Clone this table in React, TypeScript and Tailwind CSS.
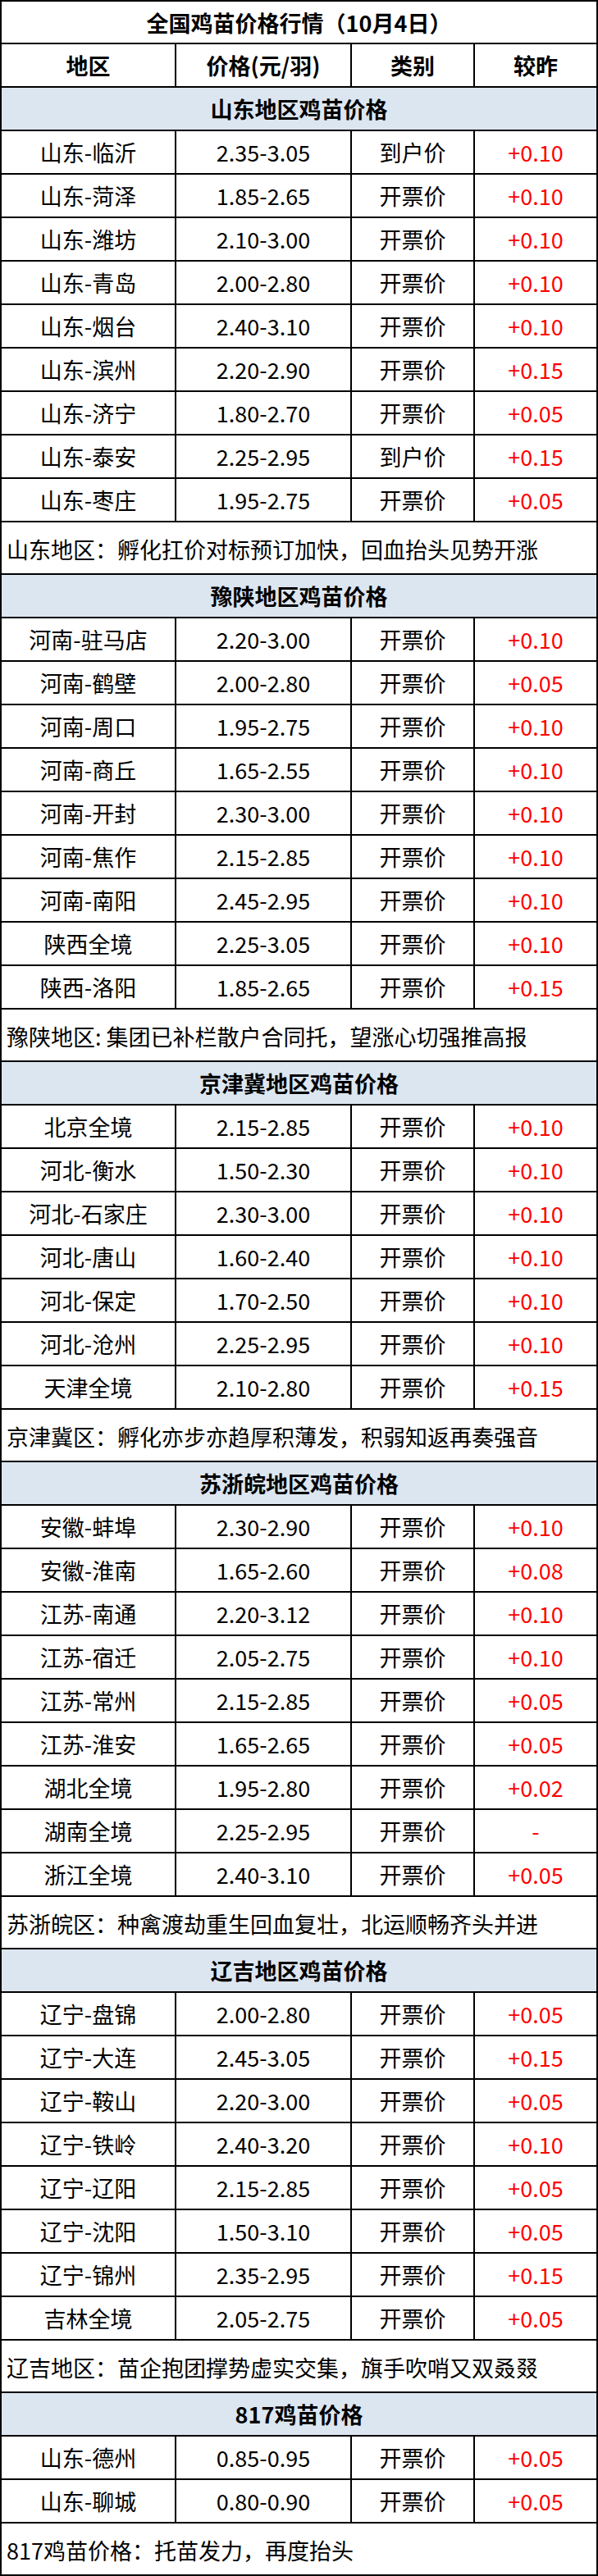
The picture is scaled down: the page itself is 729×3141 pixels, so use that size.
type Row = [string, string, string, string]

interface Section {
  title: string
  rows: Row[]
  note: string
}

const sections: Section[] = [
  {
    title: "山东地区鸡苗价格",
    rows: [
      ["山东-临沂", "2.35-3.05", "到户价", "+0.10"],
      ["山东-菏泽", "1.85-2.65", "开票价", "+0.10"],
      ["山东-潍坊", "2.10-3.00", "开票价", "+0.10"],
      ["山东-青岛", "2.00-2.80", "开票价", "+0.10"],
      ["山东-烟台", "2.40-3.10", "开票价", "+0.10"],
      ["山东-滨州", "2.20-2.90", "开票价", "+0.15"],
      ["山东-济宁", "1.80-2.70", "开票价", "+0.05"],
      ["山东-泰安", "2.25-2.95", "到户价", "+0.15"],
      ["山东-枣庄", "1.95-2.75", "开票价", "+0.05"],
    ],
    note: "山东地区：孵化扛价对标预订加快，回血抬头见势开涨",
  },
  {
    title: "豫陕地区鸡苗价格",
    rows: [
      ["河南-驻马店", "2.20-3.00", "开票价", "+0.10"],
      ["河南-鹤壁", "2.00-2.80", "开票价", "+0.05"],
      ["河南-周口", "1.95-2.75", "开票价", "+0.10"],
      ["河南-商丘", "1.65-2.55", "开票价", "+0.10"],
      ["河南-开封", "2.30-3.00", "开票价", "+0.10"],
      ["河南-焦作", "2.15-2.85", "开票价", "+0.10"],
      ["河南-南阳", "2.45-2.95", "开票价", "+0.10"],
      ["陕西全境", "2.25-3.05", "开票价", "+0.10"],
      ["陕西-洛阳", "1.85-2.65", "开票价", "+0.15"],
    ],
    note: "豫陕地区: 集团已补栏散户合同托，望涨心切强推高报",
  },
  {
    title: "京津冀地区鸡苗价格",
    rows: [
      ["北京全境", "2.15-2.85", "开票价", "+0.10"],
      ["河北-衡水", "1.50-2.30", "开票价", "+0.10"],
      ["河北-石家庄", "2.30-3.00", "开票价", "+0.10"],
      ["河北-唐山", "1.60-2.40", "开票价", "+0.10"],
      ["河北-保定", "1.70-2.50", "开票价", "+0.10"],
      ["河北-沧州", "2.25-2.95", "开票价", "+0.10"],
      ["天津全境", "2.10-2.80", "开票价", "+0.15"],
    ],
    note: "京津冀区：孵化亦步亦趋厚积薄发，积弱知返再奏强音",
  },
  {
    title: "苏浙皖地区鸡苗价格",
    rows: [
      ["安徽-蚌埠", "2.30-2.90", "开票价", "+0.10"],
      ["安徽-淮南", "1.65-2.60", "开票价", "+0.08"],
      ["江苏-南通", "2.20-3.12", "开票价", "+0.10"],
      ["江苏-宿迁", "2.05-2.75", "开票价", "+0.10"],
      ["江苏-常州", "2.15-2.85", "开票价", "+0.05"],
      ["江苏-淮安", "1.65-2.65", "开票价", "+0.05"],
      ["湖北全境", "1.95-2.80", "开票价", "+0.02"],
      ["湖南全境", "2.25-2.95", "开票价", "-"],
      ["浙江全境", "2.40-3.10", "开票价", "+0.05"],
    ],
    note: "苏浙皖区：种禽渡劫重生回血复壮，北运顺畅齐头并进",
  },
  {
    title: "辽吉地区鸡苗价格",
    rows: [
      ["辽宁-盘锦", "2.00-2.80", "开票价", "+0.05"],
      ["辽宁-大连", "2.45-3.05", "开票价", "+0.15"],
      ["辽宁-鞍山", "2.20-3.00", "开票价", "+0.05"],
      ["辽宁-铁岭", "2.40-3.20", "开票价", "+0.10"],
      ["辽宁-辽阳", "2.15-2.85", "开票价", "+0.05"],
      ["辽宁-沈阳", "1.50-3.10", "开票价", "+0.05"],
      ["辽宁-锦州", "2.35-2.95", "开票价", "+0.15"],
      ["吉林全境", "2.05-2.75", "开票价", "+0.05"],
    ],
    note: "辽吉地区：苗企抱团撑势虚实交集，旗手吹哨又双叒叕",
  },
  {
    title: "817鸡苗价格",
    rows: [
      ["山东-德州", "0.85-0.95", "开票价", "+0.05"],
      ["山东-聊城", "0.80-0.90", "开票价", "+0.05"],
    ],
    note: "817鸡苗价格：托苗发力，再度抬头",
  },
]

function DataRow({ row, bold = false }: { row: Row; bold?: boolean }) {
  const weight = bold ? "font-bold" : "font-normal"
  return (
    <div className={`flex ${bold ? "h-[53px]" : "h-[53px]"} border-t-2 border-black ${weight}`}>
      <div className="w-[211px] flex items-center justify-center">{row[0]}</div>
      <div className="w-[214px] flex items-center justify-center border-l-2 border-black">{row[1]}</div>
      <div className="w-[150px] flex items-center justify-center border-l-2 border-black">{row[2]}</div>
      <div
        className={`w-[150px] flex items-center justify-center border-l-2 border-black ${
          bold ? "text-black" : "text-[#ff0000]"
        }`}
      >
        {row[3]}
      </div>
    </div>
  )
}

export default function App() {
  return (
    <div className="w-[729px] bg-white text-black text-[27px] leading-none font-['Noto_Sans_CJK_SC',sans-serif]">
      <div className="border-x-2 border-b-2 border-black">
        {/* Title */}
        <div className="h-[52px] border-t-2 border-black flex items-center justify-center font-bold">
          全国鸡苗价格行情（10月4日）
        </div>
        <DataRow row={["地区", "价格(元/羽)", "类别", "较昨"]} bold />

        {sections.map((s) => (
          <div key={s.title}>
            <div className="h-[53px] border-t-2 border-black bg-[#dce6f1] flex items-center justify-center font-bold">
              {s.title}
            </div>
            {s.rows.map((r) => (
              <DataRow key={r[0]} row={r} />
            ))}
            <div className="h-[64px] border-t-2 border-black flex items-center pl-[6px] pt-[2px]">
              {s.note}
            </div>
          </div>
        ))}
      </div>
    </div>
  )
}
